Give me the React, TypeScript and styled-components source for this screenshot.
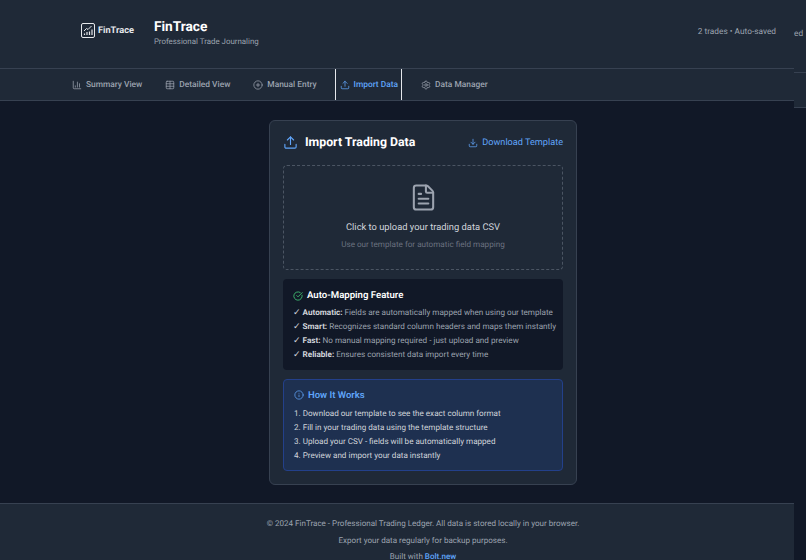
import React from 'react';
import styled, { createGlobalStyle } from 'styled-components';
import {
  BarChart3,
  Table,
  PlusCircle,
  Upload,
  Settings,
  Download,
  FileText,
  CheckCircle,
  Info,
} from 'lucide-react';

const GlobalStyle = createGlobalStyle`
  html, body {
    margin: 0;
    padding: 0;
    height: 560px;
    overflow: hidden;
    background: #111827;
    font-family: Roboto, "Liberation Sans", sans-serif;
    text-rendering: geometricPrecision;
  }
`;

const tabs = [
  { label: 'Summary View', Icon: BarChart3 },
  { label: 'Detailed View', Icon: Table },
  { label: 'Manual Entry', Icon: PlusCircle },
  { label: 'Import Data', Icon: Upload, active: true },
  { label: 'Data Manager', Icon: Settings },
];

const features = [
  ['Automatic:', 'Fields are automatically mapped when using our template'],
  ['Smart:', 'Recognizes standard column headers and maps them instantly'],
  ['Fast:', 'No manual mapping required - just upload and preview'],
  ['Reliable:', 'Ensures consistent data import every time'],
];

const steps = [
  '1. Download our template to see the exact column format',
  '2. Fill in your trading data using the template structure',
  '3. Upload your CSV - fields will be automatically mapped',
  '4. Preview and import your data instantly',
];

const App: React.FC = () => {
  return (
    <Screen>
      <GlobalStyle />
      <Page>
        <Header>
          <Brand>
            <Logo>
              <svg width="14" height="15" viewBox="0 0 14 15" fill="none" stroke="#e5e7eb" strokeWidth="1">
                <rect x="0.5" y="0.5" width="13" height="14" rx="1.5" />
                <path d="M3 8l2.5-2.5 1.5 1 3.5-3.5" />
                <path d="M3.5 12v-1.5M6 12V9M8.5 12V8.5M11 12V6.5" strokeWidth="1.2" />
              </svg>
              <LogoText>FinTrace</LogoText>
            </Logo>
            <TitleBlock>
              <Title>FinTrace</Title>
              <Subtitle>Professional Trade Journaling</Subtitle>
            </TitleBlock>
          </Brand>
          <Status>2 trades • Auto-saved</Status>
        </Header>

        <Nav>
          {tabs.map(({ label, Icon, active }) => (
            <Tab key={label} $active={active}>
              <Icon size={10} strokeWidth={1.8} />
              {label}
            </Tab>
          ))}
        </Nav>

        <Main>
          <Card>
            <CardHead>
              <CardTitle>
                <Upload size={15} color="#60a5fa" strokeWidth={1.8} />
                Import Trading Data
              </CardTitle>
              <TemplateLink>
                <Download size={10} strokeWidth={1.8} />
                Download Template
              </TemplateLink>
            </CardHead>

            <DropZone>
              <FileText size={29} color="#9ca3af" strokeWidth={1.7} />
              <DropTitle>Click to upload your trading data CSV</DropTitle>
              <DropHint>Use our template for automatic field mapping</DropHint>
            </DropZone>

            <FeatureBox>
              <BoxTitle>
                <CheckCircle size={10} color="#4ade80" strokeWidth={1.8} />
                Auto-Mapping Feature
              </BoxTitle>
              <Lines>
                {features.map(([name, text]) => (
                  <FeatureLine key={name}>
                    <Tick>✓</Tick> <strong>{name}</strong> {text}
                  </FeatureLine>
                ))}
              </Lines>
            </FeatureBox>

            <HowBox>
              <HowTitle>
                <Info size={10} strokeWidth={1.8} />
                How It Works
              </HowTitle>
              <Lines>
                {steps.map((step) => (
                  <StepLine key={step}>{step}</StepLine>
                ))}
              </Lines>
            </HowBox>
          </Card>
        </Main>

        <Footer>
          <FooterLine>© 2024 FinTrace - Professional Trading Ledger. All data is stored locally in your browser.</FooterLine>
          <FooterLine>Export your data regularly for backup purposes.</FooterLine>
          <FooterLine>
            Built with <BoltLink>Bolt.new</BoltLink>
          </FooterLine>
        </Footer>
      </Page>

      <Strip>
        <StripHead>ed</StripHead>
        <StripNav />
      </Strip>
    </Screen>
  );
};

export default App;

const Screen = styled.div`
  display: flex;
  width: 806px;
  height: 560px;
  overflow: hidden;
  background: #111827;
`;
const Page = styled.div`
  width: 794px;
  flex: none;
  display: flex;
  flex-direction: column;
`;
const Header = styled.header`
  flex: none;
  height: 69px;
  box-sizing: border-box;
  background: #1f2937;
  border-bottom: 1px solid #374151;
  display: flex;
  align-items: center;
  justify-content: space-between;
  padding: 0 18px 0 81px;
`;
const Brand = styled.div`
  display: flex;
  align-items: center;
  gap: 20px;
  margin-bottom: 3px;
`;
const Logo = styled.div`
  display: flex;
  align-items: center;
  gap: 3px;
  margin-bottom: 5px;
`;
const LogoText = styled.span`
  font-size: 9.2px;
  font-weight: 700;
  color: #e5e7eb;
`;
const TitleBlock = styled.div`
  display: flex;
  flex-direction: column;
`;
const Title = styled.h1`
  margin: 0;
  font-size: 13.7px;
  line-height: 18px;
  font-weight: 700;
  color: #ffffff;
`;
const Subtitle = styled.p`
  margin: 0;
  font-size: 7.9px;
  line-height: 12px;
  color: #9ca3af;
`;
const Status = styled.div`
  font-size: 8.3px;
  color: #9ca3af;
  margin-bottom: 5px;
`;
const Nav = styled.nav`
  flex: none;
  height: 32px;
  box-sizing: border-box;
  background: #1f2937;
  border-bottom: 1px solid #374151;
  display: flex;
  gap: 14px;
  padding-left: 67px;
`;
const Tab = styled.div<{ $active?: boolean }>`
  display: flex;
  align-items: center;
  gap: 4px;
  padding: 0 3px 0 4px;
  font-size: 8.4px;
  font-weight: 500;
  color: ${(p) => (p.$active ? '#60a5fa' : '#9ca3af')};
  border-left: 1px solid ${(p) => (p.$active ? '#e5e7eb' : 'transparent')};
  border-right: 1px solid ${(p) => (p.$active ? '#e5e7eb' : 'transparent')};
`;
const Main = styled.main`
  flex: none;
  height: 402px;
  box-sizing: border-box;
  padding: 19px 0 0 52px;
  display: flex;
  justify-content: center;
`;
const Card = styled.section`
  width: 308px;
  height: 365px;
  box-sizing: border-box;
  background: #1f2937;
  border: 1px solid #374151;
  border-radius: 6px;
  padding: 13px;
  display: flex;
  flex-direction: column;
`;
const CardHead = styled.div`
  display: flex;
  align-items: center;
  justify-content: space-between;
  height: 18px;
  margin-bottom: 13px;
`;
const CardTitle = styled.h2`
  margin: 0;
  display: flex;
  align-items: center;
  gap: 7px;
  font-size: 12.3px;
  font-weight: 700;
  color: #ffffff;
`;
const TemplateLink = styled.a`
  display: flex;
  align-items: center;
  gap: 4px;
  font-size: 9.15px;
  color: #60a5fa;
`;
const DropZone = styled.div`
  height: 105px;
  box-sizing: border-box;
  border: 1px dashed #4b5563;
  border-radius: 4px;
  display: flex;
  flex-direction: column;
  align-items: center;
  padding-top: 17px;
  margin-bottom: 9px;
`;
const DropTitle = styled.p`
  margin: 9px 0 0;
  font-size: 9.35px;
  line-height: 14px;
  color: #d1d5db;
`;
const DropHint = styled.p`
  margin: 3px 0 0;
  font-size: 8.15px;
  line-height: 12px;
  color: #6b7280;
`;
const FeatureBox = styled.div`
  height: 92px;
  box-sizing: border-box;
  background: #111827;
  border-radius: 4px;
  padding: 10px 10px 0;
  margin-bottom: 9px;
`;
const HowBox = styled.div`
  height: 92px;
  box-sizing: border-box;
  background: #1e3050;
  border: 1px solid #23408a;
  border-radius: 4px;
  padding: 8px 10px 0;
`;
const BoxTitle = styled.h3`
  margin: 0 0 2px;
  display: flex;
  align-items: center;
  gap: 4px;
  height: 14px;
  font-size: 9.6px;
  font-weight: 600;
  color: #ffffff;
`;
const HowTitle = styled(BoxTitle)`
  margin-bottom: 4px;
  font-size: 9.5px;
  color: #60a5fa;
`;
const Lines = styled.div`
  display: flex;
  flex-direction: column;
`;
const FeatureLine = styled.div`
  height: 14px;
  font-size: 8.15px;
  line-height: 14px;
  color: #9ca3af;
  white-space: nowrap;

  strong {
    font-weight: 700;
    color: #d1d5db;
  }
`;
const Tick = styled.span`
  font-family: "DejaVu Sans", sans-serif;
  font-size: 9px;
  line-height: 1;
  color: #d1d5db;
`;
const StepLine = styled.div`
  font-size: 8.1px;
  line-height: 14px;
  color: #d1d5db;
  white-space: nowrap;
`;
const Footer = styled.footer`
  flex: 1;
  min-height: 0;
  background: #1f2937;
  border-top: 1px solid #374151;
  padding: 14px 0 0 52px;
  display: flex;
  flex-direction: column;
  align-items: center;
  gap: 5.5px;
`;
const FooterLine = styled.p`
  margin: 0;
  font-size: 8.05px;
  line-height: 11px;
  color: #9ca3af;
`;
const BoltLink = styled.a`
  color: #60a5fa;
  font-weight: 500;
`;
const Strip = styled.aside`
  width: 12px;
  flex: none;
  overflow: hidden;
`;
const StripHead = styled.div`
  height: 73px;
  box-sizing: border-box;
  background: #1f2937;
  border-bottom: 1px solid #374151;
  padding-top: 29px;
  font-size: 8.3px;
  line-height: 11px;
  color: #9ca3af;
`;
const StripNav = styled.div`
  height: 35px;
  box-sizing: border-box;
  background: #1f2937;
  border-bottom: 1px solid #374151;
`;
